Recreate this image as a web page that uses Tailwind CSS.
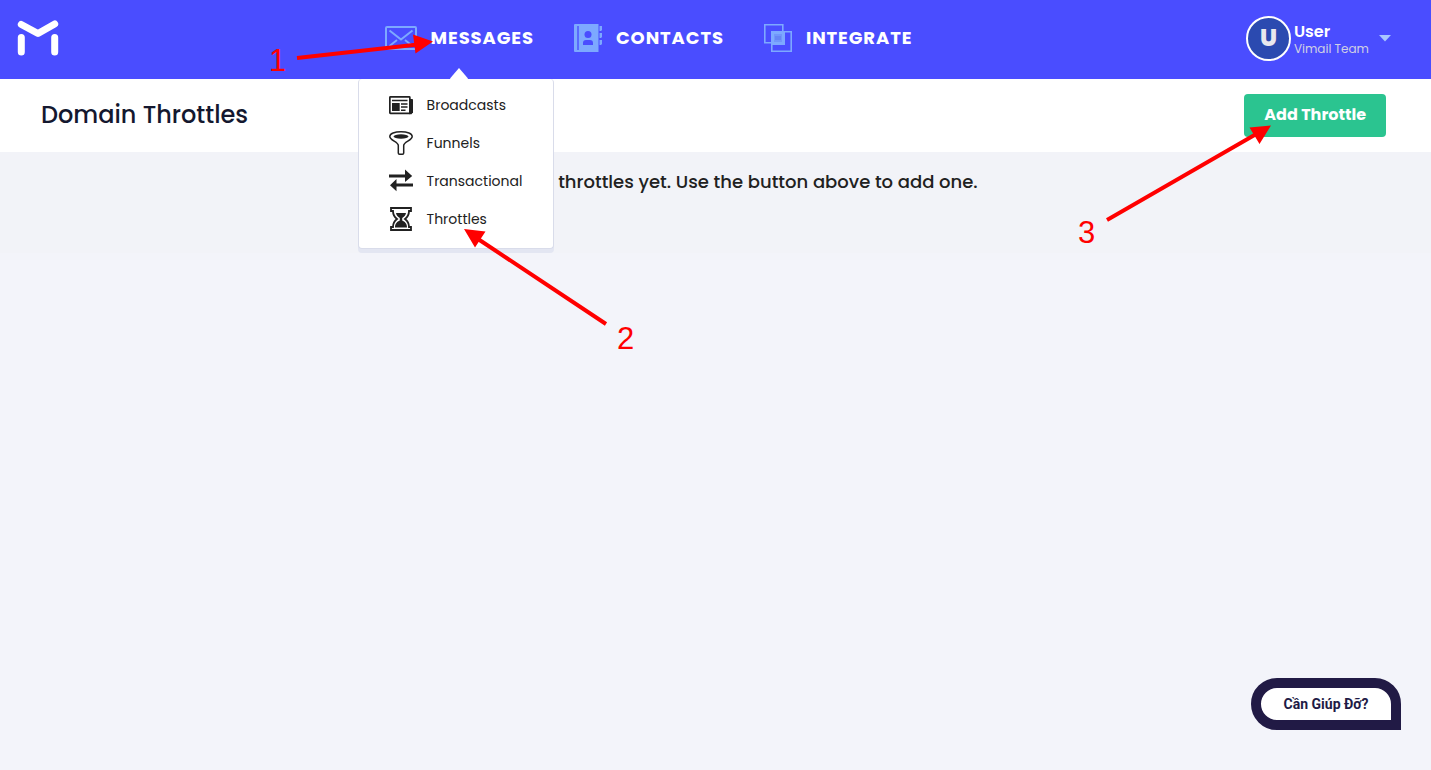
<!DOCTYPE html>
<html lang="en">
<head>
    <meta charset="UTF-8">
    <meta name="viewport" content="width=device-width, initial-scale=1.0">
    <title>Domain Throttles</title>
    <script src="https://cdn.jsdelivr.net/npm/@tailwindcss/browser@4"></script>
</head>
<body class="relative min-h-screen bg-[#f3f4fa] text-[#212121] font-['Poppins','Inter',sans-serif]">
    <!-- Top bar -->
    <header class="flex items-center justify-between h-[79px] pl-[17px] pr-10 pb-[3px] bg-[#4a4dff] text-white">
        <a href="#" aria-label="Home">
            <svg class="w-[42px] h-9" viewBox="0 0 42 36" fill="none" stroke="#fff" stroke-width="7" stroke-linecap="round" stroke-linejoin="round">
                <path d="M4.300 4.500 21 13.500 37.700 4"/>
                <path d="M4.300 17.500V32M37.700 17.500V32"/>
            </svg>
        </a>

        <nav class="flex items-center gap-10 pr-2 text-lg font-bold tracking-wider">
            <div class="relative">
                <button class="flex items-center gap-3.5">
                    <svg class="w-8 h-6" viewBox="0 0 32 24" fill="none" stroke="#7da9ff" stroke-width="2">
                        <rect x="1" y="1" width="30" height="22" rx="1"/>
                        <path d="M4.500 4.500 16 13.500 27.500 4.500M4.500 20 12 14M27.500 20 20 14"/>
                    </svg>
                    MESSAGES
                </button>
                <!-- Messages menu -->
                <div class="absolute -left-[27px] top-[55px] z-10 w-[196px] pt-[7px] pb-2.5 bg-white border border-t-0 border-[#d9dcea] rounded shadow-[0_4px_0_#e3e6f2] text-[#212121] text-sm font-normal tracking-normal">
                    <svg class="absolute left-[91px] -top-[11px] w-[18px] h-3" viewBox="0 0 18 12" fill="#fff"><path d="M9 0 18 10.500V12H0V10.500z"/></svg>
                    <a href="#" class="flex items-center gap-3.5 h-[38px] pl-[30px]">
                        <svg class="w-6 h-6" viewBox="0 0 24 24" fill="none" stroke="#212121" stroke-width="1.700">
                            <rect x=".85" y="3.850" width="20" height="16.500" rx=".6"/>
                            <path d="M21 6h2.200q.8 0 .8.800V19.200l-1.500 2H20z" fill="#212121" stroke="none"/>
                            <path d="M3 10h7.700v8H3z" fill="#212121" stroke="none"/>
                            <path d="M3 7.500h15.500M12 11h6.500M12 14h6.500M12 17.300h4.500" stroke-width="1.500"/>
                        </svg>
                        Broadcasts
                    </a>
                    <a href="#" class="flex items-center gap-3.5 h-[38px] pl-[30px]">
                        <svg class="w-6 h-6" viewBox="0 0 24 24" fill="none" stroke="#212121" stroke-width="1.500">
                            <path d="M.8 5.500C.8 2.600 5.800.8 12 .8s11.200 1.800 11.200 4.700c0 3.800-8.500 5.500-8.500 9V22q0 1.200-1.200 1.200h-3Q9.300 23.200 9.300 22v-7.500c0-3.500-8.500-5.200-8.500-9z"/>
                            <ellipse cx="12" cy="5.500" rx="7.500" ry="2.200" fill="#212121" stroke="none"/>
                        </svg>
                        Funnels
                    </a>
                    <a href="#" class="flex items-center gap-3.5 h-[38px] pl-[30px]">
                        <svg class="w-6 h-6" viewBox="0 0 24 24" fill="#212121">
                            <path d="M0 5.500h16V.5l7.200 6.500L16 13V8.500H0zM24 14.500H7.500V10L1 16.300l6.500 6v-4.800H24z"/>
                        </svg>
                        Transactional
                    </a>
                    <a href="#" class="flex items-center gap-3.5 h-[38px] pl-[30px]">
                        <svg class="w-6 h-6" viewBox="0 0 24 24" fill="none" stroke="#212121" stroke-width="1.800">
                            <path d="M2 1h20v3h-2c0 4.200-1.300 6-4 8 2.700 2 4 3.800 4 8h2v3H2v-3h2c0-4.200 1.300-6 4-8-2.700-2-4-3.800-4-8H2z"/>
                            <path d="M7 6h10c-.5 2.500-1.800 3.500-3.800 5v2.500c2.500 1 4.800 3 4.800 7H6c0-4 2.300-6 4.800-7V11C8.800 9.500 7.500 8.500 7 6z" fill="#212121" stroke="none"/>
                        </svg>
                        Throttles
                    </a>
                </div>
            </div>

            <button class="flex items-center gap-3.5">
                <svg class="w-7 h-7" viewBox="0 0 28 28" fill="#7da9ff">
                    <path d="M1 0h23.500v28H1q-1 0-1-1V1q0-1 1-1z"/>
                    <path d="M25.500 2H28v4l-1 1h-1.500zM25.500 9H28v4l-1 1h-1.500zM25.500 16H28v4l-1 1h-1.500z"/>
                    <path d="M3.300 2h1.400v24H3.300zM9 21v-2q0-3 3-3h4q3 0 3 3v2z" fill="#4a4dff"/>
                    <circle cx="14" cy="10.500" r="3.500" fill="#4a4dff"/>
                </svg>
                CONTACTS
            </button>

            <button class="flex items-center gap-3.5">
                <svg class="w-7 h-7" viewBox="0 0 28 28" fill="none" stroke="#7da9ff" stroke-width="1.600">
                    <path d="M.8.8h18v18H.8zM7.800 7.800h19.400v19.400H7.800z"/>
                    <path d="M7 7h14v14H7z" fill="#7da9ff" stroke="none"/>
                    <path d="M10 10h8v8h-8z" fill="#7196fb" stroke="none"/>
                    <path d="M11 12h6v4h-6z" fill="#6685f5" stroke="none"/>
                </svg>
                INTEGRATE
            </button>
        </nav>

        <button class="flex items-center text-left">
            <span class="flex items-center justify-center w-[45px] h-[45px] rounded-full border-2 border-white bg-[#2b4ab0] text-[#e8e8ee] text-2xl font-extrabold">U</span>
            <span class="ml-[3px] pt-0.5">
                <span class="block text-base leading-5 font-semibold">User</span>
                <span class="block text-xs leading-3.5 text-[#d0d0e4]">Vimail Team</span>
            </span>
            <svg class="ml-2.5 w-3 h-[7px]" viewBox="0 0 12 7" fill="#a9c6ff"><path d="M0 0h12L6 6.500z"/></svg>
        </button>
    </header>

    <!-- Page title -->
    <div class="flex items-center justify-between h-[73px] pl-[41px] pr-[45px] bg-white">
        <h1 class="pb-0.5 text-2xl font-medium text-[#14182f]">Domain Throttles</h1>
        <button class="h-[43px] px-5 pb-px rounded bg-[#2bc490] text-white text-base font-bold">Add Throttle</button>
    </div>

    <main class="h-[101px] pt-4 bg-[#f2f3f8] text-center">
        <p class="text-lg font-medium">No domain throttles yet. Use the button above to add one.</p>
    </main>

    <!-- Help button -->
    <button class="fixed right-[30px] bottom-10 w-[150px] h-[52px] rounded-[26px] rounded-br-none border-10 border-[#211a45] bg-white text-[#211a45] text-sm font-bold font-['Roboto',sans-serif]">Cần Giúp Đỡ?</button>

    <!-- Step arrows -->
    <svg class="absolute left-0 top-0 z-20 pointer-events-none" width="1431" height="400" fill="red" font-family="Liberation Sans, sans-serif" font-size="31">
        <path d="M297 58 418 44.500M606 324 478 239M1107 220 1258 133" stroke="red" stroke-width="4"/>
        <path d="M433 41.500 413 34.500 415.500 53.500zM464 229 485.500 231.500 475 247.500zM1271 125.500 1249.500 127.500 1259.500 144z"/>
        <text x="269" y="71">1</text>
        <text x="617" y="349">2</text>
        <text x="1078" y="243">3</text>
    </svg>
</body>
</html>
